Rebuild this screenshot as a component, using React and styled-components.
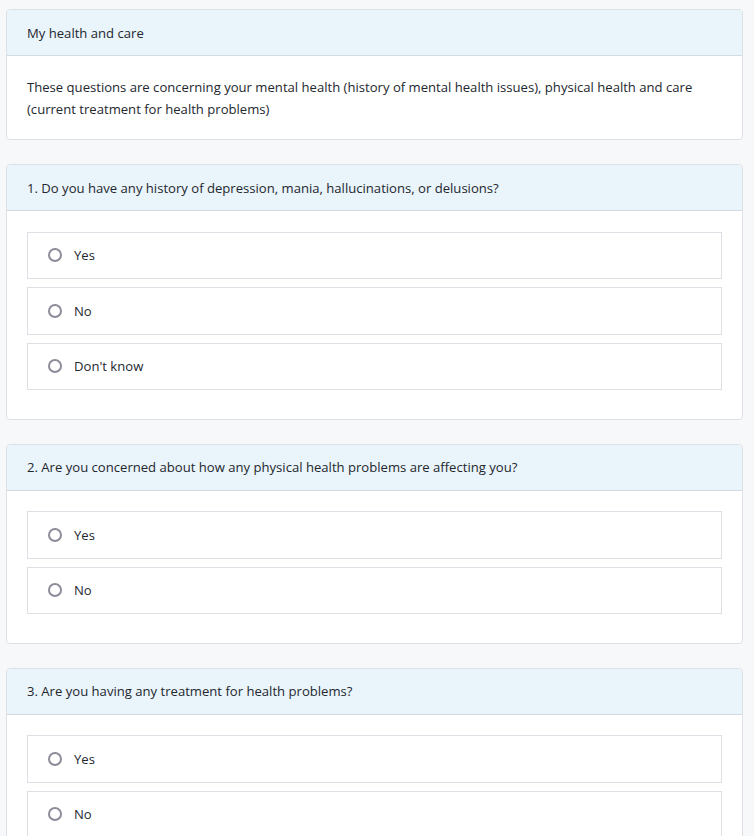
import React from "react";
import styled, { createGlobalStyle } from "styled-components";

const Global = createGlobalStyle`
  html, body { margin: 0; padding: 0; background: #f7f8fa; }
  body { font-family: "Open Sans", "Noto Sans", sans-serif; color: #23272e; }
`;

const Page = styled.div`
  padding: 9px 11px 0 6px;
  display: flex;
  flex-direction: column;
  gap: 24px;
`;

const Card = styled.section`
  background: #fff;
  border: 1px solid #dde1e6;
  border-radius: 4px;
  overflow: hidden;
`;

const CardHeader = styled.div`
  background: #eaf4fb;
  border-bottom: 1px solid #d3dae1;
  height: 46px;
  box-sizing: border-box;
  padding: 0 20px;
  display: flex;
  align-items: center;
  font-size: 13.1px;
`;

const CardBody = styled.div`
  padding: ${(p) => (p.$options ? "20.5px 20px 20.5px" : "20px 20px 19px")};
`;

const Description = styled.p`
  margin: 0;
  font-size: 13.1px;
  line-height: 22px;
`;

const OptionList = styled.div`
  display: flex;
  flex-direction: column;
  gap: 8px;
  padding-bottom: 8px;
`;

const Option = styled.label`
  display: flex;
  align-items: center;
  gap: 12px;
  height: 47.5px;
  box-sizing: border-box;
  border: 1px solid #dcdfe3;
  padding: 0 20px;
  font-size: 13.1px;
  cursor: pointer;
`;

const Radio = styled.span`
  width: 14px;
  height: 14px;
  box-sizing: border-box;
  border: 2px solid #8c8b98;
  border-radius: 50%;
  flex: none;
`;

const questions = [
  {
    q: "1. Do you have any history of depression, mania, hallucinations, or delusions?",
    opts: ["Yes", "No", "Don't know"],
  },
  {
    q: "2. Are you concerned about how any physical health problems are affecting you?",
    opts: ["Yes", "No"],
  },
  {
    q: "3. Are you having any treatment for health problems?",
    opts: ["Yes", "No"],
  },
];

export default function App() {
  return (
    <>
      <Global />
      <Page>
        <Card>
          <CardHeader>My health and care</CardHeader>
          <CardBody>
            <Description>
              These questions are concerning your mental health (history of mental health issues), physical health and care (current treatment for health problems)
            </Description>
          </CardBody>
        </Card>
        {questions.map((item) => (
          <Card key={item.q}>
            <CardHeader>{item.q}</CardHeader>
            <CardBody $options>
              <OptionList>
                {item.opts.map((o) => (
                  <Option key={o}>
                    <Radio />
                    {o}
                  </Option>
                ))}
              </OptionList>
            </CardBody>
          </Card>
        ))}
      </Page>
    </>
  );
}
